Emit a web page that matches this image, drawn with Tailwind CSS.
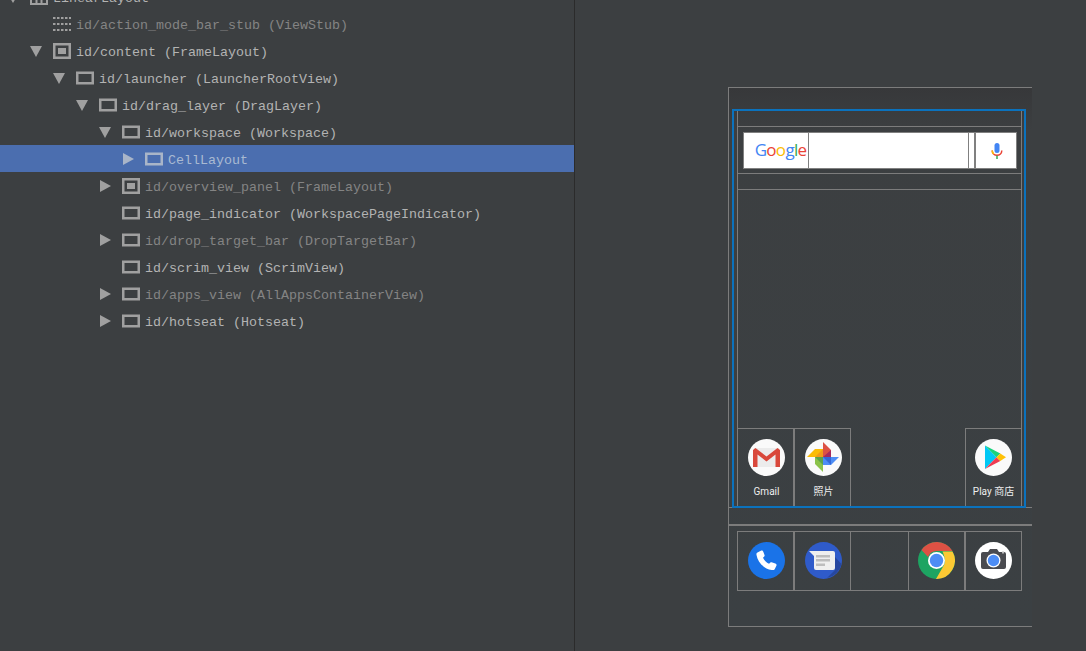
<!DOCTYPE html>
<html>
<head>
<meta charset="utf-8">
<script src="https://cdn.jsdelivr.net/npm/@tailwindcss/browser@4"></script>
</head>
<body class="m-0 bg-[#3c3f41]">
<div class="flex h-[651px] w-[1086px] overflow-hidden bg-[#3c3f41] font-['Liberation_Mono',monospace] text-[13.33px]">

  <!-- Tree panel -->
  <div class="h-full w-[575px] shrink-0 overflow-hidden border-r border-[#2b2b2b]">
    <div class="-mt-[17px] flex flex-col">

      <div class="flex h-[27px] items-center pl-[7px] text-[#b3b3b3]">
        <svg class="mr-[11px] shrink-0" width="12" height="12" viewBox="0 0 12 12"><path d="M0 2h12L6 12z" fill="#a0a0a0"/></svg>
        <svg class="mr-[5px] shrink-0" width="18" height="16" viewBox="0 0 18 16" fill="none" stroke="#a0a0a0" stroke-width="2"><rect x="1" y="1" width="16" height="14"/><path d="M6.500 1v14M11.500 1v14"/></svg>
        <span class="translate-y-[1.500px]">LinearLayout</span>
      </div>

      <div class="flex h-[27px] items-center pl-[53px] text-[#848484]">
        <svg class="mr-[5px] shrink-0" width="18" height="16" viewBox="0 0 18 16" fill="none" stroke="#a0a0a0" stroke-width="2" stroke-dasharray="2.500 1.500"><path d="M0 2h18M0 8h18M0 14h18"/></svg>
        <span class="translate-y-[1.500px] whitespace-pre">id/action_mode_bar_stub (ViewStub)</span>
      </div>

      <div class="flex h-[27px] items-center pl-[30px] text-[#b3b3b3]">
        <svg class="mr-[11px] shrink-0" width="12" height="12" viewBox="0 0 12 12"><path d="M0 1h12L6 12z" fill="#a0a0a0"/></svg>
        <svg class="mr-[5px] shrink-0" width="18" height="16" viewBox="0 0 18 16"><rect x="1.250" y="1.250" width="15.500" height="13.500" fill="none" stroke="#a0a0a0" stroke-width="2.500"/><rect x="5" y="5" width="8" height="6" fill="#a0a0a0"/></svg>
        <span class="translate-y-[1.500px] whitespace-pre">id/content (FrameLayout)</span>
      </div>

      <div class="flex h-[27px] items-center pl-[53px] text-[#b3b3b3]">
        <svg class="mr-[11px] shrink-0" width="12" height="12" viewBox="0 0 12 12"><path d="M0 1h12L6 12z" fill="#a0a0a0"/></svg>
        <svg class="mr-[5px] shrink-0" width="18" height="16" viewBox="0 0 18 16"><rect x="1.250" y="2.750" width="15.500" height="10.500" fill="none" stroke="#a0a0a0" stroke-width="2.500"/></svg>
        <span class="translate-y-[1.500px] whitespace-pre">id/launcher (LauncherRootView)</span>
      </div>

      <div class="flex h-[27px] items-center pl-[76px] text-[#b3b3b3]">
        <svg class="mr-[11px] shrink-0" width="12" height="12" viewBox="0 0 12 12"><path d="M0 1h12L6 12z" fill="#a0a0a0"/></svg>
        <svg class="mr-[5px] shrink-0" width="18" height="16" viewBox="0 0 18 16"><rect x="1.250" y="2.750" width="15.500" height="10.500" fill="none" stroke="#a0a0a0" stroke-width="2.500"/></svg>
        <span class="translate-y-[1.500px] whitespace-pre">id/drag_layer (DragLayer)</span>
      </div>

      <div class="flex h-[27px] items-center pl-[99px] text-[#b3b3b3]">
        <svg class="mr-[11px] shrink-0" width="12" height="12" viewBox="0 0 12 12"><path d="M0 1h12L6 12z" fill="#a0a0a0"/></svg>
        <svg class="mr-[5px] shrink-0" width="18" height="16" viewBox="0 0 18 16"><rect x="1.250" y="2.750" width="15.500" height="10.500" fill="none" stroke="#a0a0a0" stroke-width="2.500"/></svg>
        <span class="translate-y-[1.500px] whitespace-pre">id/workspace (Workspace)</span>
      </div>

      <div class="flex h-[27px] items-center bg-[#4b6eaf] pl-[122px] text-[#a9bad2]">
        <svg class="mr-[11px] shrink-0" width="12" height="12" viewBox="0 0 12 12"><path d="M1 0l11 6L1 12z" fill="#a9b5c8"/></svg>
        <svg class="mr-[5px] shrink-0" width="18" height="16" viewBox="0 0 18 16"><rect x="1.250" y="2.750" width="15.500" height="10.500" fill="none" stroke="#a9b5c8" stroke-width="2.500"/></svg>
        <span class="translate-y-[1.500px] whitespace-pre">CellLayout</span>
      </div>

      <div class="flex h-[27px] items-center pl-[99px] text-[#848484]">
        <svg class="mr-[11px] shrink-0" width="12" height="12" viewBox="0 0 12 12"><path d="M1 0l11 6L1 12z" fill="#a0a0a0"/></svg>
        <svg class="mr-[5px] shrink-0" width="18" height="16" viewBox="0 0 18 16"><rect x="1.250" y="1.250" width="15.500" height="13.500" fill="none" stroke="#a0a0a0" stroke-width="2.500"/><rect x="5" y="5" width="8" height="6" fill="#a0a0a0"/></svg>
        <span class="translate-y-[1.500px] whitespace-pre">id/overview_panel (FrameLayout)</span>
      </div>

      <div class="flex h-[27px] items-center pl-[122px] text-[#b3b3b3]">
        <svg class="mr-[5px] shrink-0" width="18" height="16" viewBox="0 0 18 16"><rect x="1.250" y="2.750" width="15.500" height="10.500" fill="none" stroke="#a0a0a0" stroke-width="2.500"/></svg>
        <span class="translate-y-[1.500px] whitespace-pre">id/page_indicator (WorkspacePageIndicator)</span>
      </div>

      <div class="flex h-[27px] items-center pl-[99px] text-[#848484]">
        <svg class="mr-[11px] shrink-0" width="12" height="12" viewBox="0 0 12 12"><path d="M1 0l11 6L1 12z" fill="#a0a0a0"/></svg>
        <svg class="mr-[5px] shrink-0" width="18" height="16" viewBox="0 0 18 16"><rect x="1.250" y="2.750" width="15.500" height="10.500" fill="none" stroke="#a0a0a0" stroke-width="2.500"/></svg>
        <span class="translate-y-[1.500px] whitespace-pre">id/drop_target_bar (DropTargetBar)</span>
      </div>

      <div class="flex h-[27px] items-center pl-[122px] text-[#b3b3b3]">
        <svg class="mr-[5px] shrink-0" width="18" height="16" viewBox="0 0 18 16"><rect x="1.250" y="2.750" width="15.500" height="10.500" fill="none" stroke="#a0a0a0" stroke-width="2.500"/></svg>
        <span class="translate-y-[1.500px] whitespace-pre">id/scrim_view (ScrimView)</span>
      </div>

      <div class="flex h-[27px] items-center pl-[99px] text-[#848484]">
        <svg class="mr-[11px] shrink-0" width="12" height="12" viewBox="0 0 12 12"><path d="M1 0l11 6L1 12z" fill="#a0a0a0"/></svg>
        <svg class="mr-[5px] shrink-0" width="18" height="16" viewBox="0 0 18 16"><rect x="1.250" y="2.750" width="15.500" height="10.500" fill="none" stroke="#a0a0a0" stroke-width="2.500"/></svg>
        <span class="translate-y-[1.500px] whitespace-pre">id/apps_view (AllAppsContainerView)</span>
      </div>

      <div class="flex h-[27px] items-center pl-[99px] text-[#b3b3b3]">
        <svg class="mr-[11px] shrink-0" width="12" height="12" viewBox="0 0 12 12"><path d="M1 0l11 6L1 12z" fill="#a0a0a0"/></svg>
        <svg class="mr-[5px] shrink-0" width="18" height="16" viewBox="0 0 18 16"><rect x="1.250" y="2.750" width="15.500" height="10.500" fill="none" stroke="#a0a0a0" stroke-width="2.500"/></svg>
        <span class="translate-y-[1.500px] whitespace-pre">id/hotseat (Hotseat)</span>
      </div>
    </div>
  </div>

  <!-- Device preview (a free canvas of view bounds). Origin at 575,0 -->
  <div class="relative h-full flex-1 font-['Roboto','Noto_Sans_CJK_SC',sans-serif]">
    <div class="absolute left-[153px] top-[87px] h-[540px] w-[304px] overflow-hidden border-l border-t border-b border-[#7c7c7c] bg-gradient-to-b from-[#37383a] via-[#3c3f41] via-[8%] to-[#3b4043]">

      <!-- inner content frame: offsets now relative to 729,88 -->
      <div class="absolute left-[8px] top-[21px] h-[398px] w-[285px] border-x border-[#7c7c7c]"></div>
      <div class="absolute left-[8px] top-[38px] h-[48px] w-[285px] border-y border-[#7c7c7c]"></div>
      <div class="absolute left-[8px] top-[101px] h-px w-[285px] bg-[#7c7c7c]"></div>

      <!-- Search widget -->
      <div class="absolute left-[14px] top-[44px] flex h-[37px] w-[274px] border border-[#808080] bg-white">
        <div class="flex w-[65px] items-center justify-center border-r border-[#808080] pb-[2px] pl-[9px] font-['Open_Sans',sans-serif] text-[17px] font-medium leading-none tracking-[-0.7px]">
          <span class="text-[#4285f4]">G</span><span class="text-[#ea4335]">o</span><span class="text-[#fbbc05]">o</span><span class="text-[#4285f4]">g</span><span class="text-[#34a853]">l</span><span class="text-[#ea4335]">e</span>
        </div>
        <div class="w-[160px] border-r border-[#808080]"></div>
        <div class="w-[7px] border-r-2 border-[#808080]"></div>
        <div class="flex flex-1 items-center justify-center pl-[1px]">
          <svg width="12" height="16" viewBox="0 0 12 16" fill="none"><path d="M1.200 7.500a4.800 4.800 0 0 0 9.600 0" stroke="#ea4335" stroke-width="1.500"/><path d="M1.200 7.500a4.800 4.800 0 0 0 1.500 3.500" stroke="#fbbc05" stroke-width="1.500"/><path d="M6 12.500V16" stroke="#34a853" stroke-width="1.500"/><rect x="3.500" y="0" width="5" height="10" rx="2.500" fill="#4285f4"/></svg>
        </div>
      </div>

      <!-- Workspace icon row -->
      <div class="absolute left-[8px] top-[340px] flex h-[79px] w-[285px]">
        <div class="flex w-[57px] flex-col items-center border border-[#7c7c7c] pl-[2px] pt-[10px]">
          <svg width="37" height="37" viewBox="0 0 37 37"><circle cx="18.500" cy="18.500" r="18.500" fill="#fafafa"/><path d="M6 9h25v19H6z" fill="#ececec"/><path d="M5 11v17h4.500V15.500l9 7 9-7V28H32V11l-2.500-2-11 8.500-11-8.500z" fill="#d9483b"/></svg>
          <span class="mt-[9px] text-[10px] leading-[14px] text-[#eeeeee]">Gmail</span>
        </div>
        <div class="flex w-[57px] flex-col items-center border border-[#7c7c7c] pl-[2px] pt-[10px]">
          <svg width="37" height="37" viewBox="0 0 37 37"><circle cx="18.500" cy="18.500" r="18.500" fill="#fafafa"/><path d="M18 18V3l8 8v7z" fill="#dd5144"/><path d="M26 11v7h-8z" fill="#a52a5e"/><path d="M18 18h16l-8 8h-8z" fill="#4d8df5"/><path d="M18 18h8v8z" fill="#3367d6"/><path d="M18 18v15l-8-8v-7z" fill="#8bc34a"/><path d="M18 18v8l-8-8z" fill="#5aa34a"/><path d="M18 18H2l8-8h8z" fill="#fbbc05"/><path d="M18 18h-8l8-8z" fill="#f29a18"/></svg>
          <span class="mt-[9px] text-[10px] leading-[14px] text-[#eeeeee]">照片</span>
        </div>
        <div class="w-[57px]"></div><div class="w-[57px]"></div>
        <div class="flex w-[57px] flex-col items-center border border-[#7c7c7c] pt-[10px]">
          <svg width="37" height="37" viewBox="0 0 37 37"><circle cx="18.500" cy="18.500" r="18.500" fill="#fafafa"/><path d="M10 6.500V30l11.500-11.800z" fill="#00c8f5"/><path d="M10 6.500l11.500 11.700 3.800-3.800z" fill="#19d27c"/><path d="M10 30l11.500-11.800 3.800 3.800z" fill="#ef3b52"/><path d="M25.300 14.400l5.700 3.800-5.700 3.800-3.800-3.800z" fill="#ffc107"/></svg>
          <span class="mt-[9px] whitespace-nowrap text-[10px] leading-[14px] text-[#eeeeee]">Play 商店</span>
        </div>
      </div>

      <!-- Hotseat separators -->
      <div class="absolute left-0 top-[419px] h-px w-full bg-[#7c7c7c]"></div>
      <div class="absolute left-0 top-[436px] h-[2px] w-full bg-[#7c7c7c]"></div>

      <!-- Hotseat -->
      <div class="absolute left-[8px] top-[443px] flex h-[60px] w-[285px]">
        <div class="flex w-[57px] justify-center border border-[#7c7c7c] pl-[2px] pt-[10px]">
          <svg width="37" height="37" viewBox="0 0 37 37"><circle cx="18.500" cy="18.500" r="18.500" fill="#1a73e8"/><path d="M9.500 10.500l3.800-2c1-.2 1.600.3 2 1.300l1.300 3.400c.2 1-.3 1.500-1.600 2.600 1 2.500 3.500 5 6 6 1.100-1.300 1.600-1.800 2.600-1.600l3.700 1.200c1 .4 1.400 1 1.200 2l-1.800 3.800c-.5.800-1.500 1-3 .8C16 27 9.500 20 8.500 13c-.2-1.500.1-2 1-2.500z" fill="#fff"/></svg>
        </div>
        <div class="flex w-[57px] justify-center border border-[#7c7c7c] pl-[2px] pt-[10px]">
          <svg width="37" height="37" viewBox="0 0 37 37"><circle cx="18.500" cy="18.500" r="18.500" fill="#2f5bca"/><path d="M30 15v13l-8 8A18.500 18.500 0 0 0 36.500 22z" fill="#27479f"/><path d="M4 9h24a2 2 0 0 1 2 2v15a2 2 0 0 1-2 2H11a2 2 0 0 1-2-2V14z" fill="#efefef"/><path d="M11 13h14v2.500H11zM11 17h14v2.500H11zM11 21.500h9V24h-9z" fill="#bdbdbd"/></svg>
        </div>
        <div class="w-[57px] border-y border-[#7c7c7c]"></div>
        <div class="flex w-[57px] justify-center border border-[#7c7c7c] pt-[10px]">
          <svg width="37" height="37" viewBox="0 0 37 37"><circle cx="18.500" cy="18.500" r="18.500" fill="#1da462"/><path d="M3.500 8a18.500 18.500 0 0 1 31 1H18.500c-4 0-7 2-8.500 6z" fill="#dd5144"/><path d="M34.500 9.500A18.500 18.500 0 0 1 18 37l8-14c1.500-3 1-8-1.500-13.500z" fill="#fcc934"/><circle cx="18.500" cy="18.500" r="8.500" fill="#fff"/><circle cx="18.500" cy="18.500" r="6.700" fill="#4d8df5"/></svg>
        </div>
        <div class="flex w-[57px] justify-center border border-[#7c7c7c] pt-[10px]">
          <svg width="37" height="37" viewBox="0 0 37 37"><circle cx="18.500" cy="18.500" r="18.500" fill="#fff"/><path d="M8 10h5l2-3h7l2 3h5a2 2 0 0 1 2 2v13a2 2 0 0 1-2 2H8a2 2 0 0 1-2-2V12a2 2 0 0 1 2-2z" fill="#4a4b50"/><circle cx="18.500" cy="18.500" r="7" fill="#fff"/><circle cx="18.500" cy="18.500" r="5.700" fill="#4d8df5"/><rect x="27" y="9.500" width="2" height="2" fill="#bdbdbd"/></svg>
        </div>
      </div>

      <!-- Blue selection -->
      <div class="absolute left-[3px] top-[21px] h-[399px] w-[294px] border-2 border-[#0b72bd]"></div>
    </div>
  </div>
</div>
</body>
</html>
